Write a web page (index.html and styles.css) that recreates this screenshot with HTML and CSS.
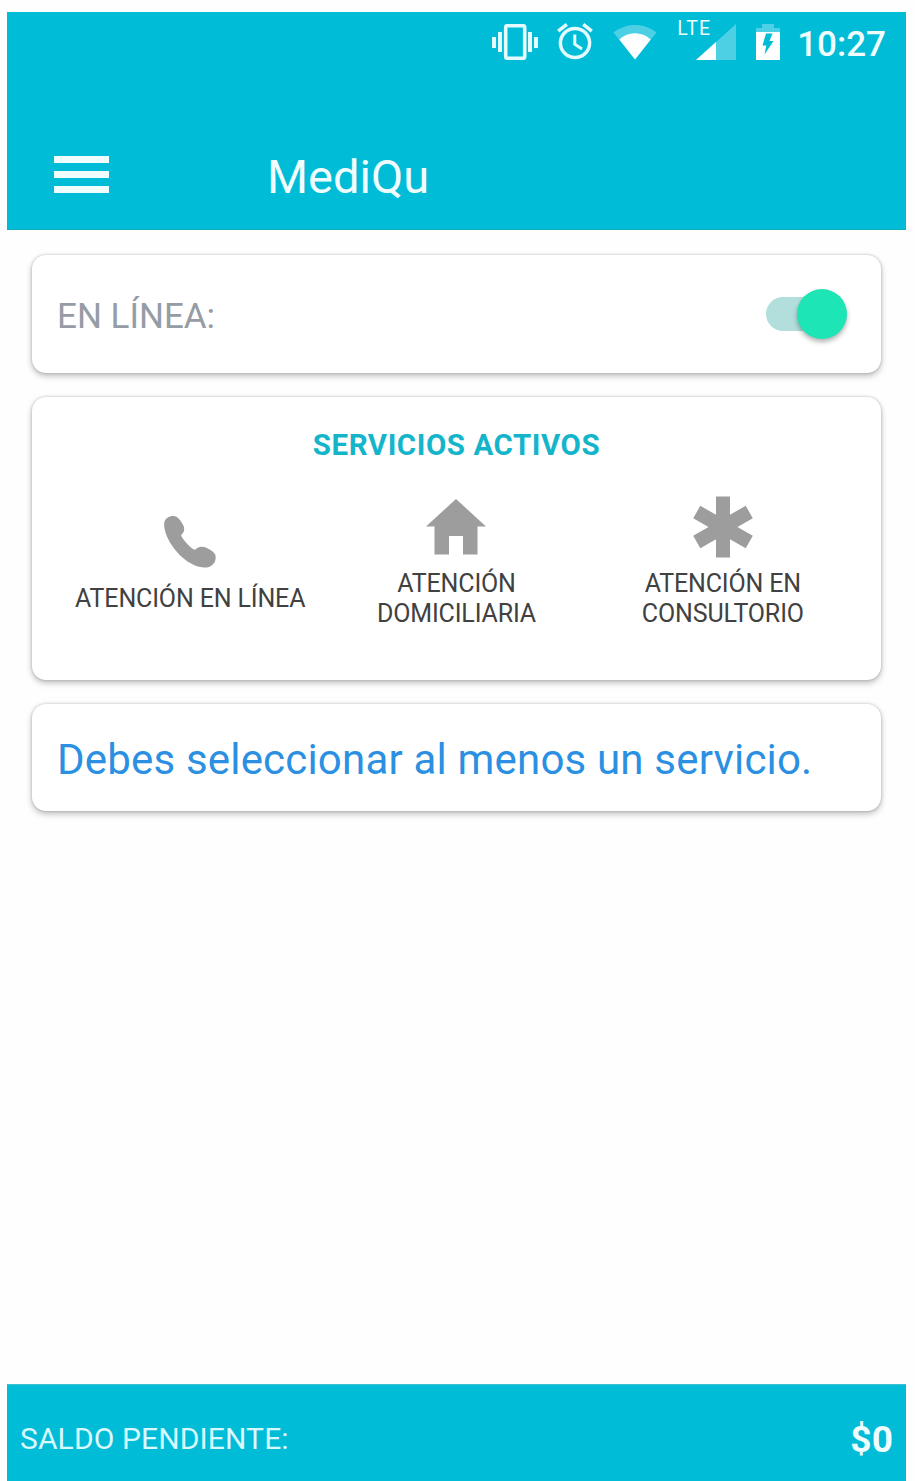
FILE: index.html
```html
<!DOCTYPE html>
<html lang="es">
<head>
    <meta charset="utf-8">
    <title>MediQu</title>
    <link rel="stylesheet" href="styles.css">
</head>
<body>
    <div class="app">
        <header class="header">
            <div class="status-bar">
                <svg class="icon-vibrate" width="46" height="36" viewBox="0 0 46 36">
                    <path d="M0 13h4v11H0zM6 8h4v20H6zM36 8h4v20h-4zM42 13h4v11h-4z" fill="#e4fbff"/>
                    <rect x="13.7" y="1.7" width="19" height="32.6" rx="1.5" fill="none" stroke="#e4fbff" stroke-width="3.6"/>
                </svg>
                <svg class="icon-alarm" width="36" height="37" viewBox="0 0 36 37">
                    <g fill="none" stroke="#e4fbff" stroke-width="3.5">
                        <circle cx="18" cy="20" r="14.6"/>
                        <path d="M1.2 8.2L9.8 1.4M34.8 8.2L26.2 1.4"/>
                        <path d="M17.8 11.5v9.8l7.2 4.6" stroke-width="3"/>
                    </g>
                </svg>
                <svg class="icon-wifi" width="44" height="36" viewBox="0 0 44 36">
                    <path d="M22 35.5L0.5 8.5C13 -1.5 31 -1.5 43.5 8.5z" fill="#fff" fill-opacity=".3"/>
                    <path d="M22 35.5L6.3 15.5C15 7.3 29 7.3 37.7 15.5z" fill="#fff"/>
                </svg>
                <div class="signal">
                    <span class="lte">LTE</span>
                    <svg width="40" height="36" viewBox="0 0 40 36">
                        <path d="M40 0V36H0z" fill="#fff" fill-opacity=".3"/>
                        <path d="M20 18V36H0z" fill="#fff"/>
                    </svg>
                </div>
                <svg class="icon-battery" width="24" height="36" viewBox="0 0 24 36">
                    <path d="M0 8V4h6V0h12v4h6v4z" fill="#fff" fill-opacity=".3"/>
                    <path d="M0 8h24v28H0z" fill="#fff"/>
                    <path d="M10 9.5h6.5L13.5 17H17.5L8.5 30.5L10.3 21.5H6.5z" fill="#00bcd7"/>
                </svg>
                <span class="clock">10:27</span>
            </div>
            <div class="toolbar">
                <div class="menu">
                    <span></span>
                    <span></span>
                    <span></span>
                </div>
                <h1>MediQu</h1>
            </div>
        </header>

        <main class="content">
            <section class="card online">
                <span class="online-label">EN LÍNEA:</span>
                <div class="switch"><div class="thumb"></div></div>
            </section>

            <section class="card services">
                <h2>SERVICIOS ACTIVOS</h2>
                <div class="service-list">
                    <div class="service">
                        <svg width="62" height="62" viewBox="0 0 62 62">
                            <path d="M5.3 11.5C6 7.5 10 5 14 5C18 4.8 20.5 8 22.5 11.3C25 15 25.8 17.5 24.8 20.5C24 22.5 22.5 23.3 22.2 24.3C22.5 27.5 31.5 37 35.3 38.8C37 38.3 38.5 36 42 35.7C46 35.5 50 37.5 54 40.8C56.5 43 57 45 56.5 48.3C56 53 51.5 56.3 47.5 56.5C39 57 31 53 23.5 46.5C16 40 9 30 6.5 21.5C5.3 17.5 4.9 14 5.3 11.5z"/>
                        </svg>
                        <span>ATENCIÓN EN LÍNEA</span>
                    </div>
                    <div class="service">
                        <svg width="62" height="62" viewBox="0 0 62 62">
                            <path d="M31 3L61 30.5H52.5V58.5H38V40H24V58.5H9.5V30.5H1z"/>
                        </svg>
                        <span>ATENCIÓN<br>DOMICILIARIA</span>
                    </div>
                    <div class="service">
                        <svg width="62" height="62" viewBox="0 0 62 62">
                            <path d="M24 .5h14v61H24z"/>
                            <path d="M8.3 9.8L60.8 39.8L53.7 52.2L1.2 22.2z"/>
                            <path d="M53.7 9.8L1.2 39.8L8.3 52.2L60.8 22.2z"/>
                        </svg>
                        <span>ATENCIÓN EN<br>CONSULTORIO</span>
                    </div>
                </div>
            </section>

            <section class="card message">
                <p>Debes seleccionar al menos un servicio.</p>
            </section>
        </main>

        <footer class="footer">
            <span>SALDO PENDIENTE:</span>
            <span class="amount">$0</span>
        </footer>
    </div>
</body>
</html>
```

FILE: styles.css
```css
* {
    box-sizing: border-box;
}

body {
    margin: 0;
    padding: 12px 9px 0 7px;
    height: 1481px;
    background-color: #fefefe;
    font-family: Roboto, "Liberation Sans", sans-serif;
    overflow: hidden;
}

h1, h2, p {
    margin: 0;
    font-weight: 400;
}

svg {
    display: block;
    flex-shrink: 0;
}

.app {
    display: flex;
    flex-direction: column;
    height: 1469px;
}

.header {
    height: 218px;
    background-color: #00bcd7;
    border-bottom: 1px solid #12a9bf;
    color: #f0fdff;
}

.status-bar {
    display: flex;
    justify-content: flex-end;
    align-items: flex-start;
    height: 104px;
    padding: 12px 20px 0 0;
}

.icon-alarm {
    margin-left: 19px;
    margin-top: -1px;
}

.icon-wifi {
    margin-left: 20px;
}

.signal {
    position: relative;
    margin-left: 39px;
}

.lte {
    position: absolute;
    left: -19px;
    top: -7px;
    font-size: 19.5px;
    line-height: 24px;
    letter-spacing: 1.2px;
}

.icon-battery {
    margin-left: 20px;
}

.clock {
    margin-left: 17px;
    padding-top: 1px;
    font-size: 35px;
    font-weight: 500;
    line-height: 40px;
}

.toolbar {
    display: flex;
    align-items: center;
    height: 120px;
    padding-left: 47px;
}

.menu {
    display: flex;
    flex-direction: column;
    gap: 8px;
    width: 55px;
    margin-top: -4px;
}

.menu span {
    height: 7px;
    background-color: #f0fdff;
}

.toolbar h1 {
    margin-left: 158px;
    padding-top: 2px;
    font-size: 47px;
    line-height: 56px;
}

.content {
    flex: 1;
    display: flex;
    flex-direction: column;
    gap: 24px;
    padding: 25px 25px 0;
}

.card {
    background-color: #fff;
    border-radius: 14px;
    box-shadow: 0 3px 6px rgba(0, 0, 0, 0.25), 0 0 3px rgba(0, 0, 0, 0.22);
}

.online {
    display: flex;
    justify-content: space-between;
    align-items: center;
    height: 118px;
    padding: 0 34px 0 25px;
}

.online-label {
    font-size: 35px;
    line-height: 42px;
    padding-top: 5px;
    color: #959ca5;
}

.switch {
    display: flex;
    align-items: center;
    justify-content: flex-end;
    width: 81px;
    height: 34px;
    border-radius: 17px;
    background: linear-gradient(to right, #b2dfdc 60px, transparent 60px);
}

.thumb {
    width: 50px;
    height: 50px;
    border-radius: 50%;
    background-color: #1de5b5;
    box-shadow: 0 3px 5px rgba(0, 0, 0, 0.3);
}

.services {
    height: 283px;
    padding: 30px 25px 0;
}

.services h2 {
    font-size: 29.5px;
    font-weight: 700;
    line-height: 36px;
    letter-spacing: 0.55px;
    text-align: center;
    color: #14b5cb;
}

.service-list {
    display: grid;
    grid-template-columns: repeat(3, 1fr);
    align-items: center;
    margin-top: 33px;
}

.service {
    display: flex;
    flex-direction: column;
    align-items: center;
    gap: 11px;
    font-size: 25px;
    line-height: 30px;
    letter-spacing: -0.15px;
    text-align: center;
    color: #414141;
}

.service svg {
    fill: #9d9d9d;
}

.message {
    height: 107px;
    padding: 31px 25px 0;
    font-size: 42px;
    line-height: 50px;
    letter-spacing: 0.19px;
    white-space: nowrap;
    color: #2b90e2;
}

.footer {
    display: flex;
    justify-content: space-between;
    align-items: center;
    height: 97px;
    padding: 12px 13px 0;
    background-color: #00bcd7;
    border-top: 1px solid #3fbfd2;
    font-size: 30px;
    line-height: 40px;
    letter-spacing: 0.12px;
    color: #d8f9ff;
}

.amount {
    padding-top: 1px;
    font-size: 37px;
    font-weight: 700;
    color: #effdff;
}
```
